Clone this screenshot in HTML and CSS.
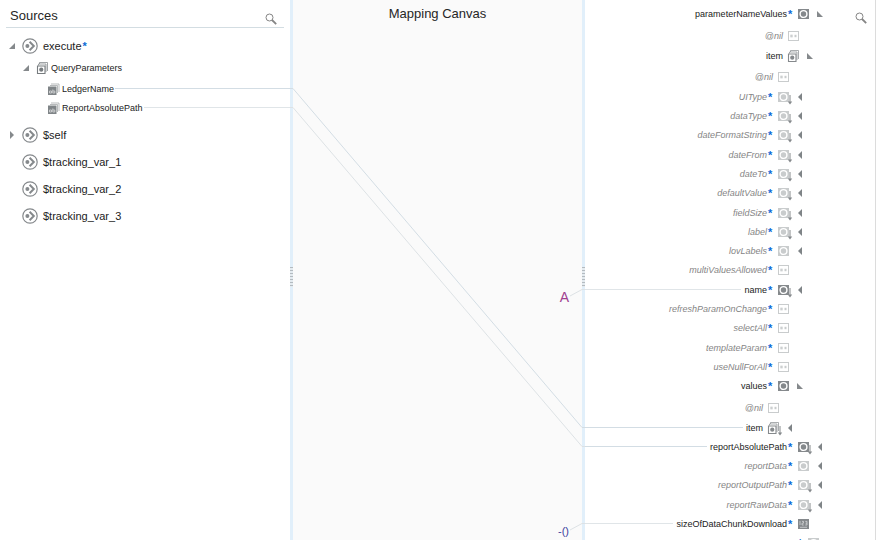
FILE: index.html
```html
<!DOCTYPE html>
<html lang="en">
<head>
<meta charset="utf-8">
<title>Mapper</title>
<link rel="stylesheet" href="styles.css">
</head>
<body>
<svg class="defs" aria-hidden="true">
  <symbol id="search" viewBox="0 0 12 12"><circle cx="4.5" cy="4.5" r="3.500" fill="none" stroke="#858585"/><path d="M7 7L11.200 11.200" stroke="#858585" stroke-width="1.8"/></symbol>
  <symbol id="root" viewBox="0 0 16 16"><circle cx="8" cy="8" r="7.200" fill="none" stroke="#85898c" stroke-width="1.2"/><circle cx="5.4" cy="8" r="2" fill="#85898c"/><path d="M7.600 3.8L11.800 8L7.600 12.2" fill="none" stroke="#85898c" stroke-width="2"/></symbol>
  <symbol id="object" viewBox="0 0 14 14"><path d="M1 2h11v10h-11z" fill="currentColor"/><circle cx="6.500" cy="7" r="3.400" fill="none" stroke="#fff" stroke-width="1.400"/></symbol>
  <symbol id="stack" viewBox="0 0 14 14"><path d="M3.500 3V1.500H11.500V10M2.500 4.500V3H10V11" fill="none" stroke="currentColor" stroke-width=".7"/><path d="M1.500 5h7.500v7.500h-7.500z" fill="#fff" stroke="currentColor" stroke-width="1.100"/><circle cx="5.250" cy="8.700" r="2.100" fill="currentColor"/></symbol>
  <symbol id="leaf" viewBox="0 0 14 14"><path d="M4 2H12V10M3 3.500H10.500V11" fill="none" stroke="#a5a8aa" stroke-width=".8"/><path d="M1 4.500h8.500v8.500H1z" fill="#7f8487"/><path d="M2.500 9h2v2h-2zM5.800 7.500V11h2V9h-2" fill="none" stroke="#d9dbdc" stroke-width=".8"/></symbol>
  <symbol id="attr" viewBox="0 0 14 14"><rect x="1.500" y="2.500" width="10" height="9" fill="none" stroke="currentColor"/><rect x="3.700" y="6" width="1.600" height="2" fill="none" stroke="currentColor" stroke-width=".7"/><path d="M7.500 5.800h2v2.400h-2z" fill="currentColor"/></symbol>
  <symbol id="number" viewBox="0 0 14 14"><path d="M1 2h11v10H1z" fill="#85898c"/><path d="M3 4v4M5 4.400h1.500v1.800H5v1.800h1.700M8.300 4.400H10v3.600H8.300M8.600 6.200H10M3 10.300h7" fill="none" stroke="#dfe1e2" stroke-width=".7"/></symbol>
  <symbol id="down" viewBox="0 0 6 10"><path d="M3 0V8" stroke="#85898c"/><path d="M0.800 6.500h4.400L3 9.500z" fill="#85898c"/></symbol>
  <symbol id="open-l" viewBox="0 0 6 8"><path d="M6 1V7H0z" fill="#85898c"/></symbol>
  <symbol id="open-r" viewBox="0 0 6 8"><path d="M0 1V7H6z" fill="#85898c"/></symbol>
  <symbol id="closed-l" viewBox="0 0 6 8"><path d="M1 0L5 4L1 8z" fill="#85898c"/></symbol>
  <symbol id="closed-r" viewBox="0 0 6 8"><path d="M5 0L1 4L5 8z" fill="#7f8487"/></symbol>
</svg>
<main class="mapper">
  <section class="sources">
    <header class="bar"><h2>Sources</h2><button class="search" aria-label="Search sources"><svg><use href="#search"/></svg></button></header>
    <ul class="tree">
      <li class="node"><button class="tri" aria-label="Collapse"><svg><use href="#open-l"/></svg></button><svg class="root"><use href="#root"/></svg><span>execute</span><b class="req">*</b></li>
      <li class="node group"><button class="tri" aria-label="Collapse"><svg><use href="#open-l"/></svg></button><svg class="icon"><use href="#stack"/></svg><span>QueryParameters</span></li>
      <li>
        <ul class="leaves">
          <li class="node leaf"><svg class="icon"><use href="#leaf"/></svg><span>LedgerName</span><i class="wire"></i></li>
          <li class="node leaf"><svg class="icon"><use href="#leaf"/></svg><span>ReportAbsolutePath</span><i class="wire faint"></i></li>
        </ul>
      </li>
      <li class="node"><button class="tri" aria-label="Expand"><svg><use href="#closed-l"/></svg></button><svg class="root"><use href="#root"/></svg><span>$self</span></li>
      <li class="node"><span class="tri"></span><svg class="root"><use href="#root"/></svg><span>$tracking_var_1</span></li>
      <li class="node"><span class="tri"></span><svg class="root"><use href="#root"/></svg><span>$tracking_var_2</span></li>
      <li class="node"><span class="tri"></span><svg class="root"><use href="#root"/></svg><span>$tracking_var_3</span></li>
    </ul>
  </section>
  <div class="divider"><span class="grip"></span></div>
  <section class="canvas">
    <h2>Mapping Canvas</h2>
    <svg class="links" viewBox="0 0 295 540" preserveAspectRatio="none" aria-hidden="true">
      <path d="M0 88.500H3L292 427.500H295"/>
      <path class="faint" d="M0 107.500H3L292 446.500H295"/>
      <path class="faint" d="M280 296L292 289.500H295M280 530L292 523.500H295"/>
    </svg>
    <span class="fn text-fn">A</span>
    <span class="fn expr-fn">-()</span>
  </section>
  <div class="divider"><span class="grip"></span></div>
  <section class="target">
    <button class="search" aria-label="Search target"><svg><use href="#search"/></svg></button>
    <ul class="rows">
      <li class="row first used l1"><span>parameterNameValues</span><b class="req">*</b><svg class="icon"><use href="#object"/></svg><button class="tri" aria-label="Collapse"><svg><use href="#open-r"/></svg></button></li>
      <li class="row nil l2"><span>@nil</span><svg class="icon"><use href="#attr"/></svg><span class="tri"></span></li>
      <li class="row used l2"><span>item</span><svg class="icon"><use href="#stack"/></svg><button class="tri" aria-label="Collapse"><svg><use href="#open-r"/></svg></button></li>
      <li class="row nil l3"><span>@nil</span><svg class="icon"><use href="#attr"/></svg><span class="tri"></span></li>
    </ul>
    <ul class="rows fields">
      <li class="row l3"><span>UIType</span><b class="req">*</b><svg class="icon"><use href="#object"/></svg><svg class="down"><use href="#down"/></svg><button class="tri" aria-label="Expand"><svg><use href="#closed-r"/></svg></button></li>
      <li class="row l3"><span>dataType</span><b class="req">*</b><svg class="icon"><use href="#object"/></svg><svg class="down"><use href="#down"/></svg><button class="tri" aria-label="Expand"><svg><use href="#closed-r"/></svg></button></li>
      <li class="row l3"><span>dateFormatString</span><b class="req">*</b><svg class="icon"><use href="#object"/></svg><svg class="down"><use href="#down"/></svg><button class="tri" aria-label="Expand"><svg><use href="#closed-r"/></svg></button></li>
      <li class="row l3"><span>dateFrom</span><b class="req">*</b><svg class="icon"><use href="#object"/></svg><svg class="down"><use href="#down"/></svg><button class="tri" aria-label="Expand"><svg><use href="#closed-r"/></svg></button></li>
      <li class="row l3"><span>dateTo</span><b class="req">*</b><svg class="icon"><use href="#object"/></svg><svg class="down"><use href="#down"/></svg><button class="tri" aria-label="Expand"><svg><use href="#closed-r"/></svg></button></li>
      <li class="row l3"><span>defaultValue</span><b class="req">*</b><svg class="icon"><use href="#object"/></svg><svg class="down"><use href="#down"/></svg><button class="tri" aria-label="Expand"><svg><use href="#closed-r"/></svg></button></li>
      <li class="row l3"><span>fieldSize</span><b class="req">*</b><svg class="icon"><use href="#object"/></svg><svg class="down"><use href="#down"/></svg><button class="tri" aria-label="Expand"><svg><use href="#closed-r"/></svg></button></li>
      <li class="row l3"><span>label</span><b class="req">*</b><svg class="icon"><use href="#object"/></svg><svg class="down"><use href="#down"/></svg><button class="tri" aria-label="Expand"><svg><use href="#closed-r"/></svg></button></li>
      <li class="row l3"><span>lovLabels</span><b class="req">*</b><svg class="icon"><use href="#object"/></svg><button class="tri" aria-label="Expand"><svg><use href="#closed-r"/></svg></button></li>
      <li class="row l3"><span>multiValuesAllowed</span><b class="req">*</b><svg class="icon"><use href="#attr"/></svg><span class="tri"></span></li>
      <li class="row used l3"><i class="wire faint"></i><span>name</span><b class="req">*</b><svg class="icon"><use href="#object"/></svg><svg class="down"><use href="#down"/></svg><button class="tri" aria-label="Expand"><svg><use href="#closed-r"/></svg></button></li>
      <li class="row l3"><span>refreshParamOnChange</span><b class="req">*</b><svg class="icon"><use href="#attr"/></svg><span class="tri"></span></li>
      <li class="row l3"><span>selectAll</span><b class="req">*</b><svg class="icon"><use href="#attr"/></svg><span class="tri"></span></li>
      <li class="row l3"><span>templateParam</span><b class="req">*</b><svg class="icon"><use href="#attr"/></svg><span class="tri"></span></li>
      <li class="row l3"><span>useNullForAll</span><b class="req">*</b><svg class="icon"><use href="#attr"/></svg><span class="tri"></span></li>
      <li class="row used l3"><span>values</span><b class="req">*</b><svg class="icon"><use href="#object"/></svg><button class="tri" aria-label="Collapse"><svg><use href="#open-r"/></svg></button></li>
    </ul>
    <ul class="rows">
      <li class="row nil l4"><span>@nil</span><svg class="icon"><use href="#attr"/></svg><span class="tri"></span></li>
      <li class="row used l4"><i class="wire"></i><span>item</span><svg class="icon"><use href="#stack"/></svg><svg class="down"><use href="#down"/></svg><button class="tri" aria-label="Expand"><svg><use href="#closed-r"/></svg></button></li>
    </ul>
    <ul class="rows report">
      <li class="row used l1"><i class="wire"></i><span>reportAbsolutePath</span><b class="req">*</b><svg class="icon"><use href="#object"/></svg><svg class="down"><use href="#down"/></svg><button class="tri" aria-label="Expand"><svg><use href="#closed-r"/></svg></button></li>
      <li class="row l1"><span>reportData</span><b class="req">*</b><svg class="icon"><use href="#object"/></svg><button class="tri" aria-label="Expand"><svg><use href="#closed-r"/></svg></button></li>
      <li class="row l1"><span>reportOutputPath</span><b class="req">*</b><svg class="icon"><use href="#object"/></svg><svg class="down"><use href="#down"/></svg><button class="tri" aria-label="Expand"><svg><use href="#closed-r"/></svg></button></li>
      <li class="row l1"><span>reportRawData</span><b class="req">*</b><svg class="icon"><use href="#object"/></svg><svg class="down"><use href="#down"/></svg><button class="tri" aria-label="Expand"><svg><use href="#closed-r"/></svg></button></li>
      <li class="row used l1"><i class="wire faint"></i><span>sizeOfDataChunkDownload</span><b class="req">*</b><svg class="icon"><use href="#number"/></svg><span class="tri"></span></li>
      <li class="row l0"><b class="req">*</b><svg class="icon"><use href="#object"/></svg><span class="tri"></span></li>
    </ul>
  </section>
</main>
</body>
</html>
```
FILE: styles.css
```css
* { box-sizing: border-box; }
body { margin: 0; overflow: hidden; background: #fff; color: #222; font: 9px/12px "Liberation Sans", Arial, sans-serif; }
ul { margin: 0; padding: 0; list-style: none; }
h2 { margin: 0; font-size: 13px; line-height: 16px; font-weight: 400; color: #262626; }
button { padding: 0; border: 0; background: none; cursor: pointer; }
svg { display: block; }
.defs { position: absolute; width: 0; height: 0; }

.mapper { display: grid; grid-template-columns: 290fr 3px 289fr 3px 291fr; height: 100vh; overflow: hidden; }
.divider { display: flex; align-items: center; justify-content: center; padding-top: 12px; background: #e1effa; }
.grip { width: 3px; height: 20px; margin-bottom: 12px; background: repeating-linear-gradient(#b4bbc0 0 1px, #e4ebf0 1px 3px); }
.search svg { width: 12px; height: 12px; }

.bar { display: flex; align-items: center; justify-content: space-between; height: 28px; margin: 0 6px 4px; padding: 4px 7px 0 4px; border-bottom: 1px solid #d3dde2; }
.bar .search { padding-top: 6px; }
.tree > .node { height: 27px; font-size: 11px; }
.node { display: flex; align-items: center; padding-left: 9px; white-space: nowrap; }
.tri { flex: none; width: 6px; height: 8px; }
.tri svg { width: 6px; height: 8px; }
.root { flex: none; width: 16px; height: 16px; margin: 0 5px 0 7px; }
.icon { flex: none; width: 14px; height: 14px; }
.tree > .group { height: 17px; padding-left: 23px; font-size: 9px; }
.group .icon { margin: 0 1px 0 7px; color: #777c7f; }
.leaves { padding: 3px 0 4px; }
.leaf { height: 19px; padding-left: 47px; }
.leaf .icon { margin-right: 1px; }
.req { padding-left: 1px; color: #0a6ad6; font-size: 11px; font-style: normal; line-height: 12px; }
.wire { flex: 1; height: 1px; margin: 0 0 0 1px; background: #d3dde4; }
.wire.faint { background: #e0e5e8; }

.canvas { position: relative; background: #fafafa; }
.canvas h2 { padding-top: 6px; text-align: center; }
.links { position: absolute; top: 0; left: -3px; width: calc(100% + 6px); height: 540px; }
.links path { fill: none; stroke: #d3dde4; vector-effect: non-scaling-stroke; }
.links .faint { stroke: #dde2e5; }
.fn { position: absolute; right: 13px; }
.text-fn { top: 290px; color: #a0408f; font-size: 14px; line-height: 14px; }
.expr-fn { top: 524px; color: #3a3fa0; font-size: 11px; line-height: 14px; }

.target { position: relative; padding-top: 4px; border-right: 1px solid #dcdcdc; }
.target .search { position: absolute; top: 12px; right: 8px; }
.row { display: flex; align-items: center; justify-content: flex-end; height: 19px; color: #858585; font-style: italic; white-space: nowrap; }
.row.used { color: #222; font-style: normal; }
.row.first { height: 20px; }
.row.nil { height: 20px; margin-top: 2px; }
.row .req { width: 6px; }
.row .icon { margin: 0 6px 0 4px; color: #c9cccd; }
.row.used .icon { color: #85898c; }
.row .down { flex: none; width: 6px; height: 10px; margin: 6px 4px 0 -10px; }
.row .wire { margin: 0 3px 0 0; }
.fields, .report { display: grid; grid-auto-rows: 1fr; }
.fields { height: 309px; }
.report { height: 116px; }
.fields .row, .report .row { height: auto; }
.l0 { padding-right: 42px; }
.l1 { padding-right: 52px; }
.l2 { padding-right: 62px; }
.l3 { padding-right: 72px; }
.l4 { padding-right: 82px; }
```
